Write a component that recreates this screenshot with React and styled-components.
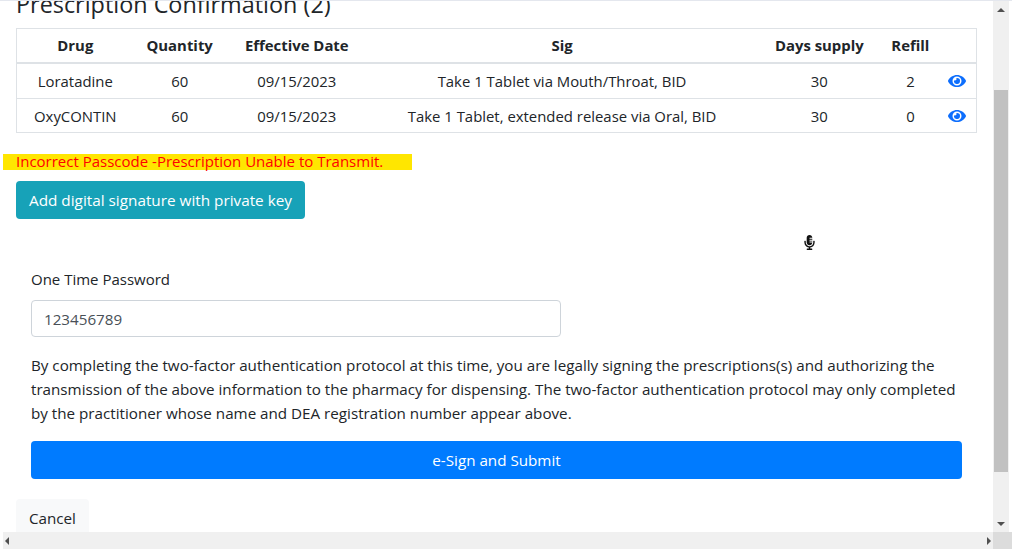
import React from 'react'
import styled, { createGlobalStyle } from 'styled-components'
import { FaEye, FaMicrophoneAlt } from 'react-icons/fa'

const GlobalStyle = createGlobalStyle`
    html, body {
        margin: 0;
        padding: 0;
        background: #fff;
        overflow: hidden;
    }
    body {
        font-family: "Open Sans", "Noto Sans", sans-serif;
        font-size: 15.2px;
        color: #212529;
    }
`;

const Frame = styled.div`
    width: 1012px;
    height: 549px;
    display: flex;
    flex-direction: column;
    overflow: hidden;
    border-top: 1px solid #e4e7ee;
    box-sizing: border-box;
`;
const Main = styled.div`
    flex: 1;
    min-height: 0;
    display: flex;
`;
const Content = styled.div`
    flex: 1;
    min-width: 0;
    padding: 0 16px 0 16px;
    overflow: hidden;
`;
const Title = styled.h4`
    margin: -10px 0 10px;
    font-size: 23.4px;
    line-height: 27px;
    font-weight: 500;
`;
const Table = styled.table`
    width: 961px;
    table-layout: fixed;
    border-collapse: collapse;
    border: 1px solid #dee2e6;
    text-align: center;
    font-size: 14.9px;
`;
const Th = styled.th`
    height: 31px;
    padding: 0 0 2px;
    font-weight: 700;
    border-bottom: 2px solid #dee2e6;
`;
const Row = styled.tr`
    &:last-child td {
        height: 33px;
    }
`;
const Td = styled.td`
    height: 34px;
    padding: 0;
    border-top: 1px solid #dee2e6;
`;
const Eye = styled(FaEye)`
    display: block;
    margin: 0 auto;
    font-size: 18px;
    color: #0d6efd;
`;
const ErrorBar = styled.div`
    margin: 21px 0 0 -13px;
    padding-left: 13px;
    width: 396px;
    height: 16px;
    line-height: 14px;
    background: #ffe600;
    color: #ff0000;
    font-size: 15px;
    white-space: nowrap;
`;
const SignButton = styled.button`
    display: block;
    margin-top: 11px;
    height: 38px;
    padding: 0 13px;
    border: none;
    border-radius: 4px;
    background: #17a2b8;
    color: #fff;
    font: inherit;
    font-size: 15.3px;
`;
const MicRow = styled.div`
    height: 18px;
    margin-top: 15px;
    padding-left: 786px;
    font-size: 15px;
    color: #111;
`;
const Form = styled.div`
    margin-top: 17px;
    padding: 0 15px;
`;
const Label = styled.label`
    display: block;
    font-size: 15px;
    line-height: 20px;
`;
const Input = styled.input`
    display: block;
    box-sizing: border-box;
    width: 530px;
    height: 37px;
    margin-top: 11px;
    padding: 0 12px;
    border: 1px solid #ced4da;
    border-radius: 4px;
    color: #495057;
    font: inherit;
`;
const Notice = styled.p`
    margin: 16px 0 0;
    line-height: 24px;
`;
const SubmitButton = styled.button`
    display: block;
    width: 931px;
    height: 38px;
    margin-top: 16px;
    border: none;
    border-radius: 4px;
    background: #007bff;
    color: #fff;
    font: inherit;
`;
const CancelButton = styled.button`
    display: block;
    height: 38px;
    margin-top: 20px;
    padding: 0 13px;
    border: none;
    border-radius: 4px;
    background: #f8f9fa;
    color: #212529;
    font: inherit;
`;
const VBar = styled.div`
    width: 16px;
    margin-right: 3px;
    background: #f0f0f0;
    display: flex;
    flex-direction: column;
    align-items: center;
`;
const VThumb = styled.div`
    width: 14px;
    height: 382px;
    margin-top: 72px;
    background: #c1c1c1;
`;
const Spacer = styled.div`
    flex: 1;
`;
const ArrowBox = styled.div`
    height: 17px;
    display: flex;
    align-items: center;
    justify-content: center;
`;
const HBar = styled.div`
    height: 17px;
    margin-left: 3px;
    background: #f0f0f0;
    display: flex;
    align-items: center;
`;
const Corner = styled.div`
    width: 19px;
    height: 17px;
    background: #dcdcdc;
`;

const Arrow = ({ d }) => (
    <svg width="8" height="8" viewBox="0 0 8 8">
        <path d={d} fill="#505050" />
    </svg>
)

const rows = [
    { drug: 'Loratadine', sig: 'Take 1 Tablet via Mouth/Throat, BID', refill: 2 },
    { drug: 'OxyCONTIN', sig: 'Take 1 Tablet, extended release via Oral, BID', refill: 0 },
]

const App = () => {
    return (
        <Frame>
            <GlobalStyle />
            <Main>
                <Content>
                    <Title>Prescription Confirmation (2)</Title>
                    <Table>
                        <colgroup>
                            <col width="117" />
                            <col width="92" />
                            <col width="142" />
                            <col width="388" />
                            <col width="126" />
                            <col width="56" />
                            <col width="38" />
                        </colgroup>
                        <thead>
                            <tr>
                                <Th>Drug</Th>
                                <Th>Quantity</Th>
                                <Th>Effective Date</Th>
                                <Th>Sig</Th>
                                <Th>Days supply</Th>
                                <Th>Refill</Th>
                                <Th></Th>
                            </tr>
                        </thead>
                        <tbody>
                            {rows.map(r => (
                                <Row key={r.drug}>
                                    <Td>{r.drug}</Td>
                                    <Td>60</Td>
                                    <Td>09/15/2023</Td>
                                    <Td>{r.sig}</Td>
                                    <Td>30</Td>
                                    <Td>{r.refill}</Td>
                                    <Td><Eye /></Td>
                                </Row>
                            ))}
                        </tbody>
                    </Table>
                    <ErrorBar>Incorrect Passcode -Prescription Unable to Transmit.</ErrorBar>
                    <SignButton>Add digital signature with private key</SignButton>
                    <MicRow><FaMicrophoneAlt /></MicRow>
                    <Form>
                        <Label>One Time Password</Label>
                        <Input defaultValue="123456789" />
                        <Notice>
                            By completing the two-factor authentication protocol at this time, you are legally signing the prescriptions(s) and authorizing the transmission of the above information to the pharmacy for dispensing. The two-factor authentication protocol may only completed by the practitioner whose name and DEA registration number appear above.
                        </Notice>
                        <SubmitButton>e-Sign and Submit</SubmitButton>
                    </Form>
                    <CancelButton>Cancel</CancelButton>
                </Content>
                <VBar>
                    <ArrowBox><Arrow d="M0 6 L4 2 L8 6 Z" /></ArrowBox>
                    <VThumb />
                    <Spacer />
                    <ArrowBox><Arrow d="M0 2 L8 2 L4 6 Z" /></ArrowBox>
                </VBar>
            </Main>
            <HBar>
                <ArrowBox><Arrow d="M6 0 L6 8 L2 4 Z" /></ArrowBox>
                <Spacer />
                <ArrowBox><Arrow d="M2 0 L6 4 L2 8 Z" /></ArrowBox>
                <Corner />
            </HBar>
        </Frame>
    )
}

export default App
